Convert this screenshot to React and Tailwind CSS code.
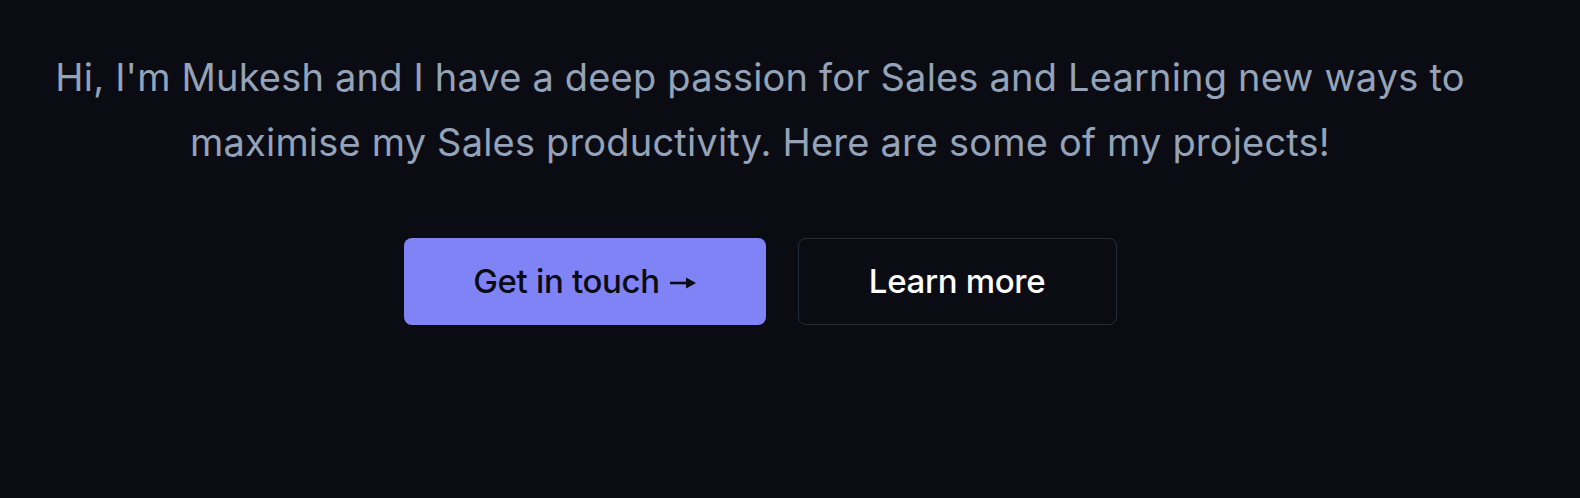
export default function App() {
  return (
    <div className="min-h-screen w-full bg-[#0b0c13] font-['Inter',sans-serif]">
      <div className="flex w-[1520px] flex-col items-center pt-[45px]">
        <p className="max-w-[1460px] text-center text-[38px] leading-[65px] tracking-[0.005em] text-[#94a3b8]">
          Hi, I'm Mukesh and I have a deep passion for Sales and Learning new ways to maximise my Sales productivity. Here are some of my projects!
        </p>
        <div className="mt-[63px] flex gap-[32px]">
          <button className="flex h-[87px] w-[362px] items-center justify-center gap-[10px] rounded-[8px] bg-[#7f83f6] text-[33px] font-medium tracking-[-0.01em] text-[#0b0c13]">
            Get in touch
            <svg width="26" height="14" viewBox="0 0 26 14" className="mt-[2px]">
              <line x1="0" y1="7" x2="18" y2="7" stroke="#0b0c13" strokeWidth="2.6" />
              <polygon points="16,1.5 26,7 16,12.5" fill="#0b0c13" />
            </svg>
          </button>
          <button className="flex h-[87px] w-[319px] items-center justify-center rounded-[8px] border-[1.5px] border-[#252c3b] bg-[#0b0c13] text-[33px] font-medium tracking-[-0.01em] text-white">
            Learn more
          </button>
        </div>
      </div>
    </div>
  );
}
